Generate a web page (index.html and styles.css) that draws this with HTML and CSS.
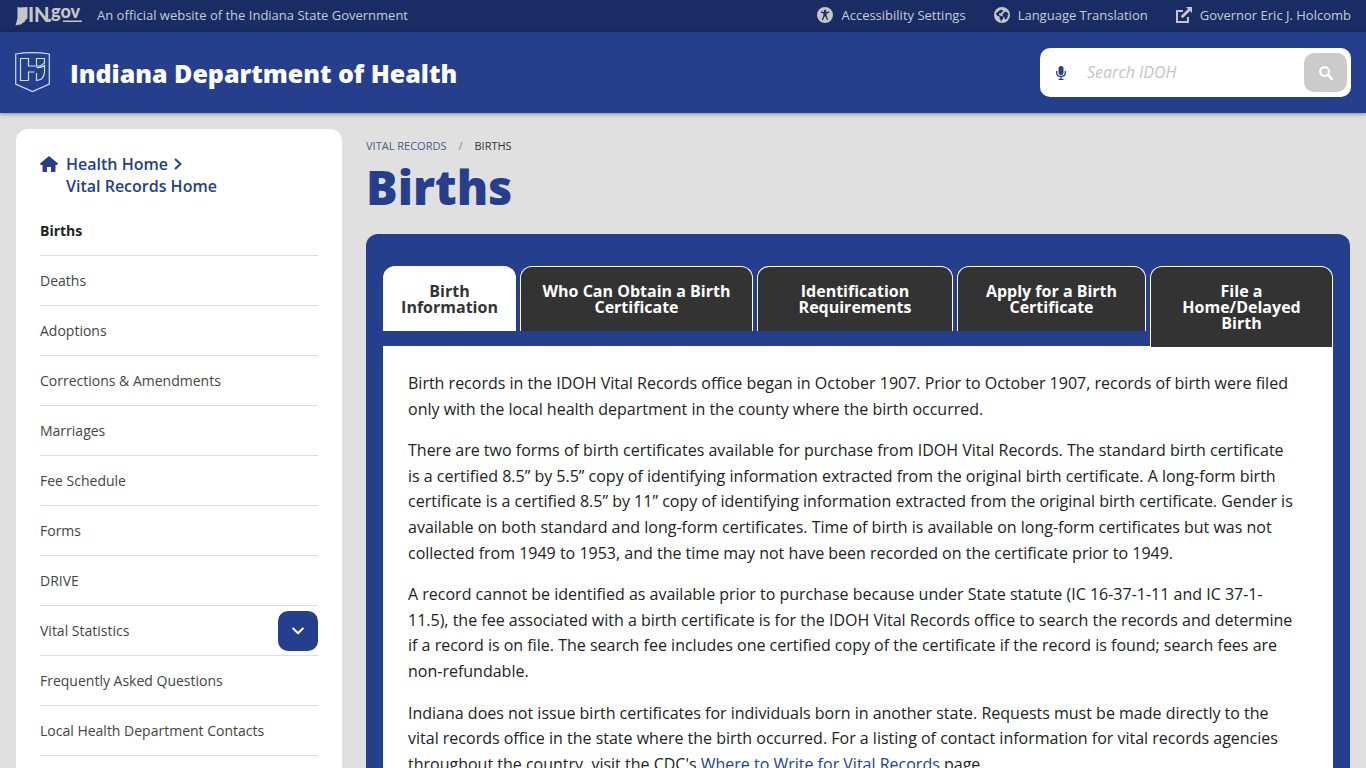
FILE: index.html
```html
<!DOCTYPE html>
<html lang="en">
<head>
<meta charset="utf-8">
<meta name="viewport" content="width=device-width, initial-scale=1">
<title>Births - Indiana Department of Health</title>
<link rel="stylesheet" href="styles.css">
</head>
<body>
<div class="topbar">
  <div class="topbar-group">
    <a class="in-logo" href="#" aria-label="IN.gov">
      <svg class="in-mark" viewBox="0 0 68 26">
        <path d="M2.500 4 5 4.500 12.500 4v11.500l-2 1.500-1 2-2 1-1.500 1.500-2.500.3L.500 22.500 1.500 19 2.500 15z"/>
        <text class="in-text" x="13" y="19">IN</text>
        <text class="in-text" x="32" y="19">.</text>
        <text class="gov-text" x="36" y="15">gov</text>
        <path d="M48 17.500h19v1.500H48z"/>
      </svg>
    </a>
    <span>An official website of the Indiana State Government</span>
  </div>
  <nav class="topbar-links" aria-label="State links">
    <a href="#"><svg viewBox="0 0 512 512" aria-hidden="true"><path fill-rule="evenodd" d="M256 0a256 256 0 1 0 0 512 256 256 0 1 0 0-512zm0 88a42 42 0 1 1 0 84 42 42 0 1 1 0-84zM120 158c4-10 15-16 26-11 75 31 145 31 220 0 11-5 22 1 26 11s-1 22-11 26l-73 26v72l43 112c4 11-1 22-11 26s-22-2-26-12l-43-101h-30l-43 101c-4 10-16 16-26 12s-15-15-11-26l43-112v-72l-73-26c-10-4-15-16-11-26z"/></svg>Accessibility Settings</a>
    <a href="#"><svg viewBox="0 0 512 512" aria-hidden="true"><circle cx="256" cy="256" r="256"/><path class="land" d="M52 205 90 255l20 30 65 20 8 25-4 42 36 42v50l25 2 10-50 42-38 14-46-48-44-78-18-22-34 8-26 36-12 18 18 18-40 48-34 2-28-40-26-50 10-48 30-42 48zM300 190l50-40 50 4 60 60 4 40-32 8 10 50-50 80-36 10-20-70-50-30-10-60z"/></svg>Language Translation</a>
    <a href="#"><svg viewBox="0 0 16 16" aria-hidden="true"><path d="M0 3h7v2H2v9h9v-4h2v6H0zM10 0h6v6l-2-2-7.300 7.300-2-2L12 2z"/></svg>Governor Eric J. Holcomb</a>
  </nav>
</div>
<header class="header">
  <a class="brand" href="#">
    <svg class="shield" viewBox="0 0 35 41" aria-hidden="true"><path d="M.700 2Q17.500-.800 34.300 2V32L17.500 39.500.700 32zM13.500 28.500H5.500V6.500h8V14h6.500M13.500 28.500V20h6M21.500 14V6.500h8V11l-4 3h-5.500M21.500 15.500q4.500.500 8-2V20q-.500 8-8 8.500V21"/></svg>
    <span class="brand-name">Indiana Department of Health</span>
  </a>
  <form class="search" role="search">
    <button class="mic" type="button" aria-label="Search by voice"><svg viewBox="0 0 10 14" aria-hidden="true"><rect x="2.500" width="5" height="9" rx="2.500" fill="currentColor"/><path d="M.700 5v2q0 3.300 4.300 3.300T9.300 7V5M5 10.500v3M2.500 13.300h5" fill="none" stroke="currentColor" stroke-width="1.300"/></svg></button>
    <input class="search-input" type="text" placeholder="Search IDOH" aria-label="Search IDOH">
    <button class="search-button" type="button" aria-label="Search"><svg viewBox="0 0 14 14" fill="none" stroke="currentColor" aria-hidden="true"><circle cx="5.600" cy="5.600" r="4.400" stroke-width="2.200"/><path d="m9 9 4 4" stroke-width="2.600" stroke-linecap="round"/></svg></button>
  </form>
</header>
<div class="layout">
  <aside class="sidebar">
    <div class="home-links">
      <svg class="home-icon" viewBox="0 0 18 16" aria-hidden="true"><path d="M9 0 18 7.600 17.200 9H15.500v6q0 1-1 1H11v-5H7v5H3.500q-1 0-1-1V9H.800L0 7.600z"/></svg>
      <div>
        <a href="#">Health Home<svg class="chevron" viewBox="0 0 8 12" aria-hidden="true"><path d="m1 1 5.500 5L1 11"/></svg></a>
        <a href="#">Vital Records Home</a>
      </div>
    </div>
    <nav aria-label="Section">
      <ul class="menu">
        <li><a class="current" href="#">Births</a></li>
        <li><a href="#">Deaths</a></li>
        <li><a href="#">Adoptions</a></li>
        <li><a href="#">Corrections &amp; Amendments</a></li>
        <li><a href="#">Marriages</a></li>
        <li><a href="#">Fee Schedule</a></li>
        <li><a href="#">Forms</a></li>
        <li><a href="#">DRIVE</a></li>
        <li><a href="#">Vital Statistics</a><button class="expand" type="button" aria-label="Expand Vital Statistics"><svg viewBox="0 0 12 8" aria-hidden="true"><path d="m1.200 1.500 4.800 4.700 4.800-4.700"/></svg></button></li>
        <li><a href="#">Frequently Asked Questions</a></li>
        <li><a href="#">Local Health Department Contacts</a></li>
      </ul>
    </nav>
  </aside>
  <main class="main">
    <nav class="crumbs" aria-label="Breadcrumb"><a href="#">Vital Records</a><span class="slash">/</span><span>Births</span></nav>
    <h1 class="title">Births</h1>
    <section class="tabs">
      <div class="tablist" role="tablist">
        <button class="tab tab-active" type="button" role="tab" aria-selected="true">Birth Information</button>
        <button class="tab" type="button" role="tab">Who Can Obtain a Birth Certificate</button>
        <button class="tab" type="button" role="tab">Identification Requirements</button>
        <button class="tab" type="button" role="tab">Apply for a Birth Certificate</button>
        <button class="tab" type="button" role="tab">File a Home/Delayed Birth</button>
      </div>
      <div class="panel" role="tabpanel">
        <p>Birth records in the IDOH Vital Records office began in October 1907. Prior to October 1907, records of birth were filed only with the local health department in the county where the birth occurred.</p>
        <p>There are two forms of birth certificates available for purchase from IDOH Vital Records. The standard birth certificate is a certified 8.5” by 5.5” copy of identifying information extracted from the original birth certificate. A long-form birth certificate is a certified 8.5” by 11” copy of identifying information extracted from the original birth certificate. Gender is available on both standard and long-form certificates. Time of birth is available on long-form certificates but was not collected from 1949 to 1953, and the time may not have been recorded on the certificate prior to 1949.</p>
        <p>A record cannot be identified as available prior to purchase because under State statute (IC 16-37-1-11 and IC 37-1-11.5), the fee associated with a birth certificate is for the IDOH Vital Records office to search the records and determine if a record is on file. The search fee includes one certified copy of the certificate if the record is found; search fees are non-refundable.</p>
        <p>Indiana does not issue birth certificates for individuals born in another state. Requests must be made directly to the vital records office in the state where the birth occurred. For a listing of contact information for vital records agencies throughout the country, visit the CDC's <a href="#">Where to Write for Vital Records</a> page.</p>
      </div>
    </section>
  </main>
</div>
</body>
</html>
```
FILE: styles.css
```css
*, *::before, *::after { box-sizing: border-box; }
body {
  margin: 0;
  background: #e0e0e0;
  color: #333;
  font-family: "Open Sans", "Noto Sans", sans-serif;
  font-size: 16px;
  line-height: 1.6;
}
a { color: inherit; text-decoration: none; }
button, input { font: inherit; margin: 0; border: 0; }
button { cursor: pointer; padding: 0; }
svg { display: block; flex: none; }

.topbar {
  display: flex;
  justify-content: space-between;
  align-items: center;
  height: 32px;
  padding: 0 15px 1px;
  background: #1a2c64;
  color: #c7cbd6;
  font-size: 13px;
}
.topbar-group { display: flex; align-items: center; gap: 14px; }
.in-mark { width: 68px; height: 26px; fill: #c6c6c6; font-family: Lato, sans-serif; }
.in-text { font-size: 20px; font-weight: 900; }
.gov-text { font-size: 18px; font-weight: 900; }
.topbar-links { display: flex; gap: 28px; }
.topbar-links a { display: flex; align-items: center; gap: 8px; }
.topbar-links svg { width: 16px; height: 16px; fill: #c6c6c6; }
.topbar-links .land { fill: #1a2c64; }

.header {
  display: flex;
  justify-content: space-between;
  align-items: center;
  padding: 16px 15px;
  background: #253e8e;
  color: #fff;
  box-shadow: 0 1px 4px rgba(0, 0, 0, .4);
}
.brand { display: flex; align-items: center; gap: 20px; }
.shield { width: 35px; height: 41px; fill: none; stroke: #cfe0ff; stroke-width: 1.2; }
.brand-name {
  font-weight: 800;
  font-size: 25px;
  line-height: 40px;
}
.search {
  display: flex;
  align-items: center;
  width: 311px;
  height: 49px;
  padding: 0 4px 0 16px;
  background: #fff;
  border-radius: 10px;
}
.mic { background: none; color: #253e8e; }
.mic svg { width: 10px; height: 14px; }
.search-input {
  flex: 1;
  min-width: 0;
  padding: 0 21px;
  background: none;
  color: #333;
  font-style: italic;
}
.search-input::placeholder { color: #c4c4c4; opacity: 1; }
.search-button {
  display: grid;
  place-items: center;
  width: 43px;
  height: 39px;
  background: #cbcbcb;
  color: #fff;
  border-radius: 10px;
}
.search-button svg { width: 14px; height: 14px; }

.layout {
  display: grid;
  grid-template-columns: 163fr 492fr;
  gap: 24px;
  padding: 16px 16px 0;
}
.sidebar {
  background: #fff;
  border-radius: 12px 12px 0 0;
  padding: 24px 24px 48px;
}
.home-links {
  display: flex;
  gap: 8px;
  padding-bottom: 9px;
  color: #253e8e;
  font-weight: 600;
  font-size: 16px;
  line-height: 22px;
}
.home-links a { display: flex; align-items: center; }
.home-icon { width: 18px; height: 16px; margin-top: 3px; fill: #253e8e; }
.chevron { width: 8px; height: 12px; margin-left: 6px; fill: none; stroke: #253e8e; stroke-width: 2; }
.menu { list-style: none; margin: 0; padding: 0; }
.menu li {
  display: flex;
  justify-content: space-between;
  align-items: center;
  height: 50px;
  border-bottom: 1px solid #dcdcdc;
  color: #444;
  font-size: 14px;
}
.menu a { padding-top: 2px; }
.menu .current { color: #222; font-weight: 700; }
.expand {
  display: grid;
  place-items: center;
  width: 40px;
  height: 40px;
  background: #253e8e;
  border-radius: 10px;
}
.expand svg { width: 12px; height: 8px; fill: none; stroke: #fff; stroke-width: 2; stroke-linecap: round; stroke-linejoin: round; }

.crumbs {
  display: flex;
  gap: 12px;
  padding-top: 8px;
  font-size: 11px;
  line-height: 18px;
  text-transform: uppercase;
}
.crumbs a { color: #4a5d85; }
.slash { color: #888; }
.title {
  margin: 0;
  padding: 4px 0 19px;
  color: #253e8e;
  font-weight: 800;
  font-size: 47px;
  line-height: 56px;
}
.tabs {
  background: #253e8e;
  border-radius: 12px 12px 0 0;
  padding: 32px 17px 0;
}
.tablist {
  display: grid;
  grid-template-columns: 133fr 233fr 196fr 189fr 183fr;
  gap: 4px;
  align-items: start;
  margin-bottom: -1px;
  position: relative;
}
.tab {
  padding: 16px;
  background: #333;
  color: #fff;
  border: 1px solid #fff;
  border-bottom: 0;
  border-radius: 12px 12px 0 0;
  font-weight: 700;
  line-height: 16px;
}
.tab-active { background: #fff; color: #333; }
.panel { background: #fff; color: #222; padding: 25px 36px 24px 25px; }
.panel p { margin: 0 0 16px; }
.panel a { color: #253e8e; }
```
